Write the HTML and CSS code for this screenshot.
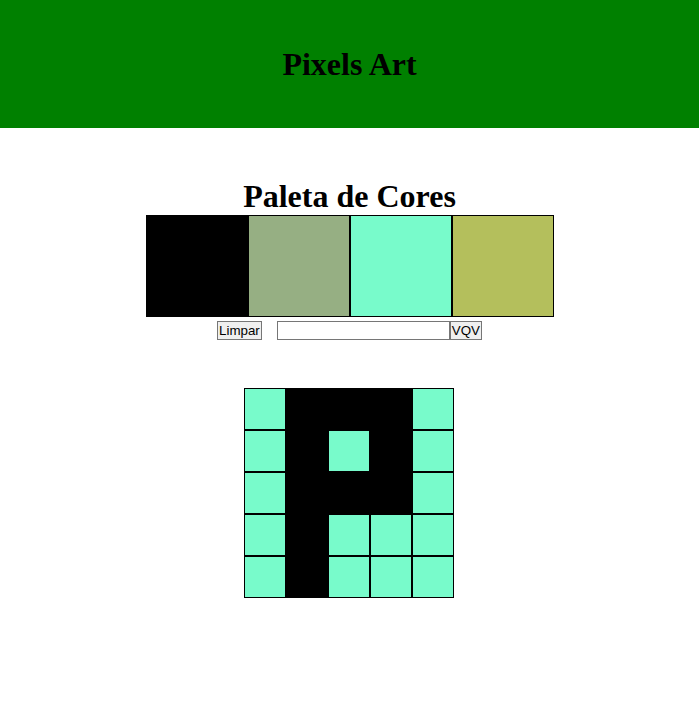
FILE: index.html
```html
<!DOCTYPE html>
<html lang="pt-BR">
<head>
<meta charset="utf-8">
<title>Pixels Art</title>
<link rel="stylesheet" href="styles.css">
</head>
<body>
<header class="topo">
  <h1 class="titulo">Pixels Art</h1>
</header>
<main class="conteudo">
  <h1 class="subtitulo">Paleta de Cores</h1>
  <div class="paleta">
    <div class="cor preto"></div>
    <div class="cor salvia"></div>
    <div class="cor agua"></div>
    <div class="cor oliva"></div>
  </div>
  <div class="controles">
    <button class="botao botao-limpar" type="button">Limpar</button>
    <div class="grupo">
      <input class="entrada" type="text">
      <button class="botao" type="button">VQV</button>
    </div>
  </div>
  <div class="quadro">
    <div class="pixel agua"></div><div class="pixel preto"></div><div class="pixel preto"></div><div class="pixel preto"></div><div class="pixel agua"></div>
    <div class="pixel agua"></div><div class="pixel preto"></div><div class="pixel agua"></div><div class="pixel preto"></div><div class="pixel agua"></div>
    <div class="pixel agua"></div><div class="pixel preto"></div><div class="pixel preto"></div><div class="pixel preto"></div><div class="pixel agua"></div>
    <div class="pixel agua"></div><div class="pixel preto"></div><div class="pixel agua"></div><div class="pixel agua"></div><div class="pixel agua"></div>
    <div class="pixel agua"></div><div class="pixel preto"></div><div class="pixel agua"></div><div class="pixel agua"></div><div class="pixel agua"></div>
  </div>
</main>
</body>
</html>
```
FILE: styles.css
```css
html, body {
  margin: 0;
  padding: 0;
  background: #ffffff;
  font-family: "Liberation Serif", "Times New Roman", serif;
}

.topo {
  background: #008000;
  height: 128px;
  display: flex;
  align-items: center;
  justify-content: center;
}

.titulo {
  margin: 0;
  font-size: 32px;
  font-weight: bold;
  color: #000;
}

.conteudo {
  display: flex;
  flex-direction: column;
  align-items: center;
}

.subtitulo {
  margin: 50px 0 0 0;
  font-size: 32px;
  font-weight: bold;
  line-height: 37px;
  color: #000;
}

.paleta {
  display: flex;
}

.cor {
  width: 100px;
  height: 100px;
  border: 1px solid #000;
}

.preto { background: #000000; }
.salvia { background: #96af83; }
.agua { background: #78fbcb; }
.oliva { background: #b4bf5c; }

.controles {
  display: flex;
  gap: 15px;
  margin-top: 4px;
  height: 19px;
}

.grupo {
  display: flex;
}

.botao {
  font-family: "Liberation Sans", Arial, sans-serif;
  font-size: 13.33px;
  height: 19px;
  padding: 0 1px;
  margin: 0;
  border: 1px solid #767676;
  background: #efefef;
  color: #000;
  line-height: 15px;
}

.entrada {
  width: 173px;
  height: 19px;
  box-sizing: border-box;
  margin: 0;
  padding: 1px 2px;
  border: 1px solid #767676;
  font-family: "Liberation Sans", Arial, sans-serif;
  font-size: 13.33px;
}

.quadro {
  display: grid;
  grid-template-columns: repeat(5, 42px);
  grid-auto-rows: 42px;
  margin: 48px 1px 0 0;
}

.pixel {
  border: 1px solid #000;
}
```
